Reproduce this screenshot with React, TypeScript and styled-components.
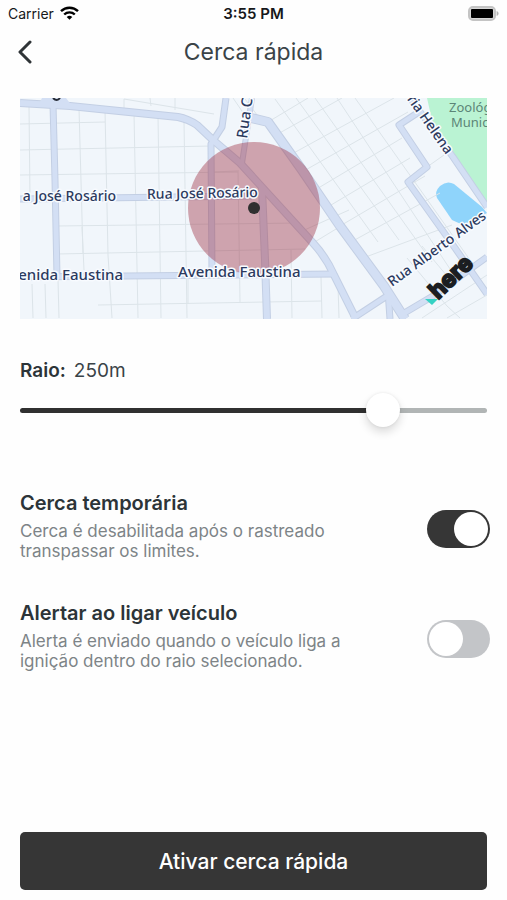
import React, { useState } from "react";
import styled, { createGlobalStyle } from "styled-components";

const GlobalStyle = createGlobalStyle`
  * { box-sizing: border-box; }
  body { margin: 0; background: #fefefe; font-family: Inter, "Liberation Sans", sans-serif; }
  button, input { font: inherit; }
`;

const Screen = styled.div`
  min-height: 100vh;
  display: flex;
  flex-direction: column;
  padding-bottom: 10px;
  color: #2c3438;
`;

const StatusBar = styled.div`
  display: grid;
  grid-template-columns: 1fr auto 1fr;
  align-items: center;
  height: 26px;
  padding: 0 8px;
  font-size: 14px;
  color: #16181a;
`;

const Carrier = styled.span`
  display: flex;
  align-items: center;
  gap: 6px;
`;

const Clock = styled.span`
  font-size: 15px;
  font-weight: 600;
`;

const BatterySlot = styled.span`
  display: flex;
  justify-content: flex-end;
`;

const Header = styled.header`
  display: grid;
  grid-template-columns: 40px 1fr 40px;
  align-items: center;
  height: 50px;
  padding: 2px 5px 0;
`;

const BackButton = styled.button`
  display: flex;
  align-items: center;
  justify-content: center;
  height: 40px;
  padding: 0;
  border: 0;
  background: none;
  color: #2f3437;
  cursor: pointer;
`;

const Title = styled.h1`
  margin: 0;
  text-align: center;
  font-size: 23px;
  line-height: 32px;
  font-weight: 400;
  color: #3a4347;
`;

const MapFrame = styled.div`
  margin: 22px 20px 0;

  svg { display: block; width: 100%; height: auto; }
`;

const RadiusSection = styled.section`
  margin: 38px 20px 0;
`;

const RadiusLabel = styled.label`
  display: flex;
  gap: 8px;
  font-size: 19px;
  line-height: 28px;
  color: #3a4347;

  strong { font-weight: 600; color: #2c3438; }
`;

const Slider = styled.input`
  appearance: none;
  display: block;
  width: 100%;
  height: 34px;
  margin: 8px 0 0;
  background: none;
  cursor: pointer;

  &::-webkit-slider-runnable-track {
    height: 5px;
    border-radius: 3px;
    background: linear-gradient(to right, #303030 var(--fill), #b1b5b5 var(--fill));
  }
  &::-webkit-slider-thumb {
    appearance: none;
    width: 34px;
    height: 34px;
    margin-top: -15px;
    border-radius: 50%;
    background: #fff;
    box-shadow: 0 5px 10px rgba(0, 0, 0, 0.14), 0 0 3px rgba(0, 0, 0, 0.08);
  }
`;

const Options = styled.section`
  display: flex;
  flex-direction: column;
  gap: 30px;
  margin: 62px 17px 24px 20px;
`;

const OptionRow = styled.div`
  display: flex;
  align-items: center;
  justify-content: space-between;
  gap: 24px;
`;

const OptionText = styled.label`
  display: block;
  max-width: 340px;
  padding-bottom: 8px;
`;

const OptionTitle = styled.span`
  display: block;
  margin-bottom: 4px;
  font-size: 20px;
  line-height: 28px;
  font-weight: 600;
`;

const OptionHint = styled.span`
  display: block;
  font-size: 17px;
  line-height: 20px;
  color: #7d8487;
`;

const Switch = styled.input`
  appearance: none;
  flex: none;
  display: flex;
  align-items: center;
  width: 63px;
  height: 38px;
  margin: 0;
  padding: 0 2px;
  border-radius: 19px;
  background: #c3c5c8;
  cursor: pointer;

  &::before {
    content: "";
    width: 34px;
    height: 34px;
    border-radius: 50%;
    background: #fff;
  }
  &:checked { background: #363636; justify-content: flex-end; }
`;

const SubmitButton = styled.button`
  margin: auto 20px 0;
  height: 58px;
  border: 0;
  border-radius: 5px;
  background: #363636;
  color: #fff;
  font-size: 21px;
  font-weight: 500;
  cursor: pointer;
`;

const StreetName = styled.text<{ $large?: boolean }>`
  font-family: "Noto Sans", sans-serif;
  font-size: ${({ $large }) => ($large ? 15 : 14)}px;
  font-weight: 500;
  fill: #2c3a5e;
  stroke: #f8fbff;
  stroke-width: 3px;
  stroke-linejoin: round;
  paint-order: stroke;
`;

const ParkName = styled.text`
  font-family: "Noto Sans", sans-serif;
  font-size: 13px;
  fill: #5c8577;
`;

const BrandMark = styled.text`
  font-family: Inter, sans-serif;
  font-size: 23px;
  font-weight: 700;
  fill: #1b1d21;
  stroke: #1b1d21;
  stroke-width: 2px;
`;

const WifiIcon = () => (
  <svg width="19" height="14" viewBox="0 0 19 14" fill="none" stroke="#000" strokeWidth="2.4" aria-hidden="true">
    <path d="M1 5.2a12.2 12.2 0 0 1 17 0" />
    <path d="M4.2 8.5a7.6 7.6 0 0 1 10.6 0" />
    <path d="M9.5 13.8 6.7 11a4 4 0 0 1 5.6 0Z" fill="#000" stroke="none" />
  </svg>
);

const BatteryIcon = () => (
  <svg width="31" height="15" viewBox="0 0 31 15" aria-hidden="true">
    <rect x="1" y="1" width="26" height="13" rx="4" fill="#d8d8d8" stroke="#c4c4c4" strokeWidth="2" />
    <rect x="3" y="3" width="22" height="9" rx="1" fill="#000" />
    <path d="M28.6 5v5c1.3-.5 2-1.4 2-2.5s-.7-2-2-2.5Z" fill="#b5b5b5" />
  </svg>
);

const BackIcon = () => (
  <svg width="16" height="24" viewBox="0 0 16 24" fill="none" stroke="currentColor" strokeWidth="3" strokeLinecap="round" strokeLinejoin="round" aria-hidden="true">
    <path d="M13 2 3 12l10 10" />
  </svg>
);

const minorStreets = [
  "M20 124 105 122M20 150 211 146M20 175 238 172M57 226 300 223M57 254 305 249M98 305 322 301",
  "M29 106 30 199M79 108 83 254M105 110 108 255 112 318M134 113 138 318M158 116 161 318M184 121 187 318",
  "M124 99V112M124 99 214 114M150 98 151 106M175 98V110M82 227 84 270M32 284 33 318M45 284 46 318M58 280 59 318",
  "M238 170 240 302M188 304V277M291 250 292 318M321 277 322 318M338 285 339 318M213 172 237 171",
  "M245 99 310 185M275 99 378 242M296 98 399 240M315 98 432 262M337 98 452 272M355 98 373 123 470 260M233 98 244 114",
  "M268 122 308 98M276 135 342 98M290 155 394 98M302 172 408 112M315 190 402 138M326 208 410 158M340 226 425 176M351 242 440 193M363 258 452 225",
  "M427 167 444 155M300 232 349 210M313 243 341 226M407 258 447 306 460 318M422 246 452 282M422 318 487 275M447 318 487 295",
];

const mainStreets = [
  { d: "M20 103 70 106 178 117Q188 119 197 125L213 140 240 163 313 243Q326 257 334 275L355 317", w: 6 },
  { d: "M20 199 252 196M20 277 125 276 335 274", w: 5 },
  { d: "M53 104 55 180 57 277", w: 5 },
  { d: "M226 98 222 127 211 144 212 275", w: 5 },
  { d: "M252 98 242 163", w: 4 },
  { d: "M262 188 265 260 267 319", w: 6 },
  { d: "M251 118 268 122 302 170 340 226 384 286 405 319", w: 8 },
  { d: "M352 319 390 294M388 290 390 319M401 315 433 296 487 257", w: 5 },
  { d: "M422 110 399 125 427 167 408 182 455 248 487 294", w: 5 },
  { d: "M410 98 453 157 487 207", w: 5 },
];

const FenceMap = () => (
  <svg viewBox="20 98 467 221" role="img" aria-label="Mapa da cerca">
    <rect x="20" y="98" width="467" height="221" fill="#f1f6fb" />
    <path d="M427 98 432 120 487 203V98Z" fill="#baf3d3" />
    <path d="M437 198Q434 192 440 186 447 180 454 184L482 207 487 213 463 225 452 220Z" fill="#8fd4fb" />
    <g fill="none" stroke="#dce4e9">
      {minorStreets.map((d) => <path key={d} d={d} />)}
    </g>
    <g fill="none" strokeLinejoin="round">
      {mainStreets.map(({ d, w }) => <path key={d} d={d} stroke="#c3cfe4" strokeWidth={w + 2} />)}
      {mainStreets.map(({ d, w }) => <path key={d} d={d} stroke="#d3dff4" strokeWidth={w} />)}
    </g>
    <path d="M42 98H66L72 106H38Z" fill="#d3dff4" />
    <path d="M53 98Q57 102 60 98" stroke="#252b36" strokeWidth="2" fill="none" />
    <circle cx="254" cy="208" r="66" fill="#9e2f42" fillOpacity="0.42" />
    <StreetName x="116" y="201" textAnchor="end">a José Rosário</StreetName>
    <StreetName x="147" y="198" transform="rotate(-1 203 197)">Rua José Rosário</StreetName>
    <StreetName $large x="123" y="280" textAnchor="end">enida Faustina</StreetName>
    <StreetName $large x="178" y="277">Avenida Faustina</StreetName>
    <StreetName $large transform="translate(247 139) rotate(-82)">Rua C</StreetName>
    <StreetName transform="translate(446 155) rotate(55)" textAnchor="end">ria Helena</StreetName>
    <StreetName transform="translate(392 287) rotate(-36)">Rua Alberto Alves</StreetName>
    <ParkName x="449" y="112">Zoológ</ParkName>
    <ParkName x="451" y="127">Munic</ParkName>
    <path d="M425 299H438L432 305Z" fill="#36d2c4" />
    <BrandMark transform="translate(438 300) rotate(-44)">here</BrandMark>
    <circle cx="254" cy="208" r="6" fill="#303030" />
  </svg>
);

const MIN_RADIUS = 50;
const MAX_RADIUS = 300;

export default function App() {
  const [radius, setRadius] = useState(250);
  const fill = `${((radius - MIN_RADIUS) / (MAX_RADIUS - MIN_RADIUS)) * 100}%`;

  return (
    <>
      <GlobalStyle />
      <Screen>
        <StatusBar>
          <Carrier>Carrier <WifiIcon /></Carrier>
          <Clock>3:55 PM</Clock>
          <BatterySlot><BatteryIcon /></BatterySlot>
        </StatusBar>
        <Header>
          <BackButton type="button" aria-label="Voltar"><BackIcon /></BackButton>
          <Title>Cerca rápida</Title>
        </Header>
        <MapFrame><FenceMap /></MapFrame>
        <RadiusSection>
          <RadiusLabel htmlFor="radius"><strong>Raio:</strong> {radius}m</RadiusLabel>
          <Slider
            id="radius"
            type="range"
            min={MIN_RADIUS}
            max={MAX_RADIUS}
            step={10}
            value={radius}
            onChange={(e) => setRadius(Number(e.target.value))}
            style={{ "--fill": fill } as React.CSSProperties}
          />
        </RadiusSection>
        <Options>
          <OptionRow>
            <OptionText htmlFor="temporary">
              <OptionTitle>Cerca temporária</OptionTitle>
              <OptionHint>Cerca é desabilitada após o rastreado transpassar os limites.</OptionHint>
            </OptionText>
            <Switch id="temporary" type="checkbox" role="switch" defaultChecked />
          </OptionRow>
          <OptionRow>
            <OptionText htmlFor="ignition">
              <OptionTitle>Alertar ao ligar veículo</OptionTitle>
              <OptionHint>Alerta é enviado quando o veículo liga a ignição dentro do raio selecionado.</OptionHint>
            </OptionText>
            <Switch id="ignition" type="checkbox" role="switch" />
          </OptionRow>
        </Options>
        <SubmitButton type="button">Ativar cerca rápida</SubmitButton>
      </Screen>
    </>
  );
}
